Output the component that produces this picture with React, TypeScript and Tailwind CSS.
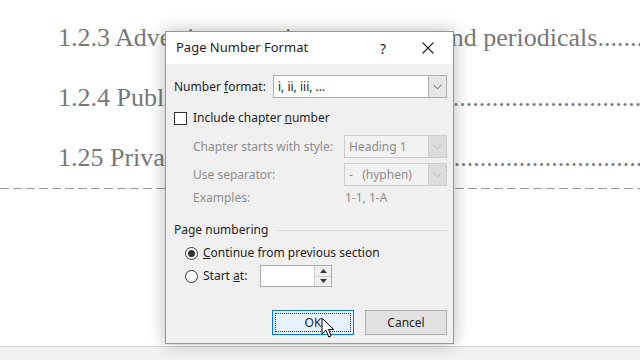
import React from 'react';

const Chevron = ({ muted }: { muted?: boolean }) => (
  <svg width="9" height="6" viewBox="0 0 9 6">
    <path d="M0.5 0.8 L4.5 4.8 L8.5 0.8" fill="none" stroke={muted ? '#b4b4b4' : '#555'} strokeWidth="1" />
  </svg>
);

const Combo = ({ value, width, muted }: { value: string; width: string; muted?: boolean }) => (
  <div
    className={`flex h-[23px] ${width} border ${
      muted ? 'border-[#cccccc] bg-[#f2f2f2] text-[#8d8d8d]' : 'border-[#acacac] bg-white text-[#222]'
    }`}
  >
    <div className="flex flex-1 items-center pl-[4px] whitespace-pre">{value}</div>
    <div
      className={`flex w-[18px] items-center justify-center border-l ${
        muted ? 'border-[#cccccc] bg-[#dcdcdc]' : 'border-[#acacac] bg-[#e6e6e6]'
      }`}
    >
      <Chevron muted={muted} />
    </div>
  </div>
);

const Radio = ({ checked }: { checked?: boolean }) => (
  <div className="flex h-[13px] w-[13px] items-center justify-center rounded-full border border-[#333] bg-white">
    {checked && <div className="h-[7px] w-[7px] rounded-full bg-[#333]" />}
  </div>
);

const dots = '.'.repeat(60);

const PageLines = () => (
  <div className="flex flex-col pt-[8px] pl-[58px] font-['Liberation_Serif',serif] text-[26px] leading-[60px] text-[#787878]">
    <div className="whitespace-nowrap overflow-hidden">
      1.2.3 Advertisements in newspapers and periodicals{dots}
    </div>
    <div className="whitespace-nowrap overflow-hidden">1.2.4 Public relations and publicity{dots}</div>
    <div className="whitespace-nowrap overflow-hidden">1.25 Private advertising agencies{dots}</div>
  </div>
);

const Dialog = () => (
  <div className="absolute left-[165px] top-[31px] flex w-[289px] h-[313px] flex-col border border-[#6e9fd5] bg-[#f0f0f0] font-['Noto_Sans',sans-serif] text-[12px] text-[#1e1e1e] shadow-[0_0_16px_rgba(0,0,0,0.28)]">
    <div className="flex h-[32px] items-center bg-white pl-[10px]">
      <span className="text-[13px]">Page Number Format</span>
      <span className="ml-auto w-[20px] text-center text-[14px]">?</span>
      <svg className="ml-[29px] mr-[19px]" width="12" height="12" viewBox="0 0 12 12">
        <path d="M0.5 0.5 L11.5 11.5 M11.5 0.5 L0.5 11.5" stroke="#222" strokeWidth="1.1" />
      </svg>
    </div>

    <div className="flex flex-col pl-[8px] pr-[6px]">
      <div className="mt-[11px] flex items-center">
        <span className="w-[99px]">
          Number <u>f</u>ormat:
        </span>
        <Combo value="i, ii, iii, ..." width="w-[174px]" />
      </div>

      <div className="mt-[11px] flex h-[18px] items-center">
        <div className="h-[13px] w-[13px] border border-[#333] bg-white" />
        <span className="ml-[6px]">
          Include chapter <u>n</u>umber
        </span>
      </div>

      <div className="mt-[8px] flex items-center pl-[19px] text-[#8d8d8d]">
        <span className="w-[151px]">Chapter starts with style:</span>
        <Combo value="Heading 1" width="w-[103px]" muted />
      </div>

      <div className="mt-[5px] flex items-center pl-[19px] text-[#8d8d8d]">
        <span className="w-[151px]">Use separator:</span>
        <Combo value="-   (hyphen)" width="w-[103px]" muted />
      </div>

      <div className="mt-[4px] flex h-[16px] items-center pl-[19px] text-[#8d8d8d]">
        <span className="w-[152px]">Examples:</span>
        <span>1-1, 1-A</span>
      </div>

      <div className="mt-[16px] flex h-[16px] items-center">
        <span>Page numbering</span>
        <div className="ml-[8px] h-px flex-1 bg-[#dcdcdc]" />
      </div>

      <div className="mt-[6px] flex h-[18px] items-center pl-[11px]">
        <Radio checked />
        <span className="ml-[5px]">
          <u>C</u>ontinue from previous section
        </span>
      </div>

      <div className="mt-[3px] flex items-center pl-[11px]">
        <Radio />
        <span className="ml-[5px] w-[57px]">
          Start <u>a</u>t:
        </span>
        <div className="flex h-[22px] w-[72px] border border-[#acacac] bg-white">
          <div className="flex-1" />
          <div className="flex w-[17px] flex-col border-l border-[#cfcfcf] bg-[#f0f0f0]">
            <div className="flex flex-1 items-center justify-center border-b border-[#cfcfcf]">
              <svg width="7" height="4" viewBox="0 0 7 4">
                <path d="M0 4 L3.5 0 L7 4 Z" fill="#333" />
              </svg>
            </div>
            <div className="flex flex-1 items-center justify-center">
              <svg width="7" height="4" viewBox="0 0 7 4">
                <path d="M0 0 L3.5 4 L7 0 Z" fill="#333" />
              </svg>
            </div>
          </div>
        </div>
      </div>

      <div className="mt-[23px] flex justify-end gap-[11px]">
        <div className="flex h-[25px] w-[82px] items-center justify-center border border-[#0078d7] bg-[#e5f1fb] p-[2px]">
          <div className="flex h-full w-full items-center justify-center border border-dotted border-[#333]">
            OK
          </div>
        </div>
        <div className="flex h-[25px] w-[82px] items-center justify-center border border-[#adadad] bg-[#e1e1e1]">
          Cancel
        </div>
      </div>
    </div>
  </div>
);

const Cursor = () => (
  <svg className="absolute left-[321px] top-[317px]" width="14" height="22" viewBox="0 0 14 22">
    <path
      d="M1 1 L1 17 L5 13.2 L7.8 20 L10.2 19 L7.5 12.4 L12.6 12.4 Z"
      fill="#fff"
      stroke="#000"
      strokeWidth="1"
      strokeLinejoin="round"
    />
  </svg>
);

export default function App() {
  return (
    <div className="relative flex h-[360px] w-[640px] flex-col overflow-hidden bg-white">
      <PageLines />
      <div className="h-px bg-[repeating-linear-gradient(90deg,#9a9a9a_0_9px,transparent_9px_13px)]" />
      <div className="flex-1" />
      <div className="h-[14px] border-t border-[#d6d6d6] bg-[#f2f2f2]" />
      <Dialog />
      <Cursor />
    </div>
  );
}
